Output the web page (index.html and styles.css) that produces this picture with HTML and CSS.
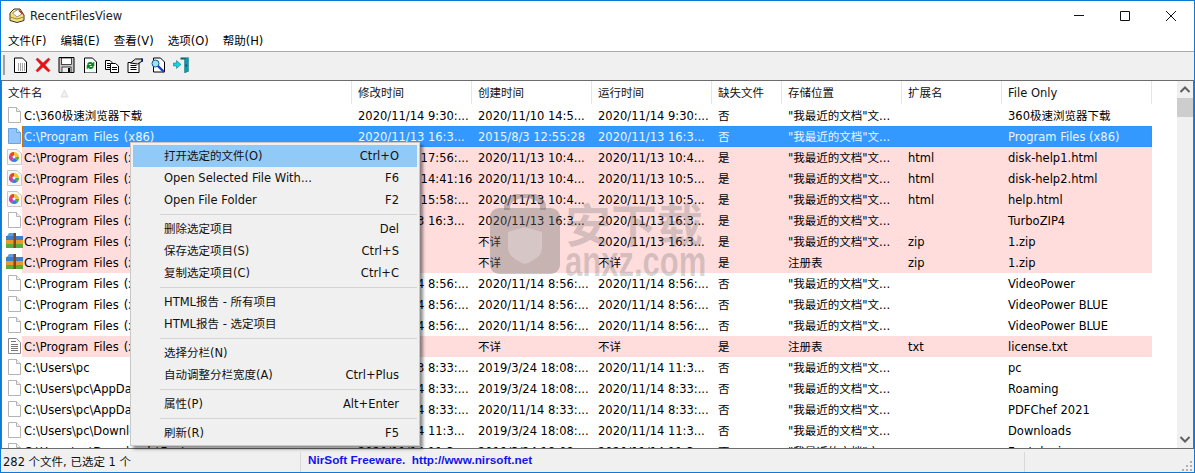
FILE: index.html
```html
<!DOCTYPE html>
<html lang="zh-CN">
<head>
<meta charset="utf-8">
<title>RecentFilesView</title>
<link rel="stylesheet" href="styles.css">
</head>
<body>
<svg class="defs" width="0" height="0" aria-hidden="true">
  <defs>
    <symbol id="doc" viewBox="0 0 13 16"><path d="M.5 .5H8.500L12.500 4.500V15.500H.5Z" fill="#fff" stroke="#b4b4b4"/><path d="M8.500 .5V4.500H12.500" fill="#f0f0f0" stroke="#b4b4b4"/></symbol>
    <symbol id="docsel" viewBox="0 0 13 16"><path d="M.5 .5H8.500L12.500 4.500V15.500H.5Z" fill="#93c5fa" stroke="#6ba3e0"/><path d="M8.500 .5V4.500H12.500" fill="#c3defa" stroke="#6ba3e0"/></symbol>
    <symbol id="txt" viewBox="0 0 13 16"><path d="M.5 .5H8.500L12.500 4.500V15.500H.5Z" fill="#fff" stroke="#8a8a8a"/><path d="M3 3.500H8M3 6.500H10M3 8.500H10M3 10.500H10M3 12.500H10" stroke="#777" fill="none"/></symbol>
    <symbol id="web" viewBox="0 0 15 16"><path d="M.5 .5H10L14.500 4.500V15.500H.5Z" fill="#f6f6f6" stroke="#c8c8c8"/><circle cx="7" cy="8" r="5" fill="#f4c430"/><path d="M7 8V3A5 5 0 0 0 2.300 6.300Z" fill="#e8413c"/><path d="M7 8L2.300 6.300A5 5 0 0 0 4.500 12.300Z" fill="#c93fa8"/><path d="M7 8L4.500 12.300A5 5 0 0 0 10.500 11.600Z" fill="#3b7de8"/><path d="M7 8L10.500 11.600A5 5 0 0 0 12 8Z" fill="#42b35a"/><circle cx="7" cy="8" r="1.400" fill="#fff"/></symbol>
    <symbol id="zip" viewBox="0 0 17 16"><path d="M1 3L3 0H9L10 3Z" fill="#5aa0e4"/><rect x="0" y="3" width="17" height="4" fill="#3f7fc9"/><rect x="0" y="7" width="17" height="4" fill="#e79a2b"/><rect x="0" y="11" width="17" height="4" fill="#5cab3c"/><rect x="7.500" y="0" width="2.500" height="15" fill="#7b4a1e"/></symbol>
    <symbol id="tb-new" viewBox="-3 -.5 19 16"><path d="M.5 .5H8.500L12.500 4.500V15H.5Z" fill="#fff" stroke="#000"/><path d="M4 6h1v1H4zM6 6h1v1H6zM8 6h1v1H8zM10 6h1v1h-1zM4 8h1v1H4zM6 8h1v1H6zM8 8h1v1H8zM10 8h1v1h-1zM4 10h1v1H4zM6 10h1v1H6zM8 10h1v1H8zM10 10h1v1h-1zM4 12h1v1H4zM6 12h1v1H6zM8 12h1v1H8zM10 12h1v1h-1z" fill="#444"/></symbol>
    <symbol id="tb-del" viewBox="-4 -1 23 16"><path d="M1.500 0L7 5L12.500 0L14 1.500L9 7L14 12.500L12.500 14L7 9L1.500 14L0 12.500L5 7L0 1.500Z" fill="#ee1111" stroke="#a00" stroke-width=".4"/></symbol>
    <symbol id="tb-save" viewBox="-3.500 0 23 16"><path d="M.5 .5H15.500V15.500H.5Z" fill="#c8c8c8" stroke="#000"/><rect x="3" y="1" width="10" height="6.500" fill="#fff" stroke="#000" stroke-width=".7"/><rect x="3.500" y="10" width="9" height="5.500" fill="#eee" stroke="#000" stroke-width=".7"/><rect x="9.500" y="11" width="2" height="4" fill="#000"/></symbol>
    <symbol id="tb-ref" viewBox="-6 -.5 23 16"><path d="M.5 .5H8.500L12.500 4.500V15.500H.5Z" fill="#fff" stroke="#000"/><path d="M3 7A3.500 3.500 0 0 1 8.800 5.500L10.300 4V8.500H5.800L7.300 7A2 2 0 0 0 4.500 7.500Z" fill="#0a8a1f"/><path d="M10 9A3.500 3.500 0 0 1 4.200 10.500L2.700 12V7.500H7.200L5.700 9A2 2 0 0 0 8.500 8.500Z" fill="#0a8a1f"/></symbol>
    <symbol id="tb-copy" viewBox="-4 -3 23 16"><path d="M.5 .5H5L7.500 3V9.500H.5Z" fill="#fff" stroke="#000"/><path d="M2 3.500H5M2 5.500H5M2 7.500H5" stroke="#000"/><path d="M5.500 3.500H10.500L13.500 6V12.500H5.500Z" fill="#fff" stroke="#000"/><path d="M7 7.500H12M7 9.500H12" stroke="#000"/></symbol>
    <symbol id="tb-prop" viewBox="-3.500 -1 23 16"><path d="M.5 4.500H11.500V14.500H.5Z" fill="#fff" stroke="#000"/><path d="M3 7.500H9M3 9.500H9M3 11.500H9" stroke="#000"/><path d="M3 5L8 1H15V3L10 6Z" fill="#ddd" stroke="#000"/><path d="M14.500 .5V4" stroke="#00208a" stroke-width="1.500"/></symbol>
    <symbol id="tb-find" viewBox="-4 -.5 23 16"><path d="M2.500 .5H9.500L13.500 4.500V14.500H2.500Z" fill="#fff" stroke="#000"/><circle cx="4.500" cy="6" r="3.500" fill="#9fe3f0" stroke="#0a5a8a"/><path d="M7 8.500L13 14.500" stroke="#1a3fd0" stroke-width="2.400"/></symbol>
    <symbol id="tb-exit" viewBox="-3.500 -.5 23 16"><path d="M7 0H15V14L11 15.500V2H7Z" fill="#0c5d6a"/><path d="M11 1.500L15 0V14L11 15.500Z" fill="#0f9aa8"/><path d="M0 5.500H3V3L7.500 7L3 11V8.500H0Z" fill="#12d6e6" stroke="#066" stroke-width=".5"/><rect x="12" y="7" width="1.200" height="2" fill="#063a42"/></symbol>
  </defs>
</svg>
<div class="window">
  <header class="titlebar">
    <svg class="app-icon" viewBox="0 0 16 15" width="16" height="15"><path d="M1 5L5 1H11L15 7V12.500L8 14.500L1 12.500Z" fill="#f5e27a" stroke="#333"/><path d="M3.500 5L9 1.500L13.500 5.500L8 9Z" fill="#fff" stroke="#555" stroke-width=".6"/><path d="M10 2.500L13.500 6" stroke="#d22" stroke-width="1.200"/><path d="M1 9L8 11L15 9" fill="none" stroke="#9a8a3a"/></svg>
    <span class="app-title">RecentFilesView</span>
    <div class="caption-buttons">
      <svg class="cap" viewBox="0 0 46 29"><path d="M18 14.500H28" stroke="#111" fill="none"/></svg>
      <svg class="cap" viewBox="0 0 46 29"><path d="M18.500 10.500H27.500V19.500H18.500Z" stroke="#111" fill="none"/></svg>
      <svg class="cap" viewBox="0 0 46 29"><path d="M18 10L28 20M28 10L18 20" stroke="#111" fill="none"/></svg>
    </div>
  </header>
  <nav class="menubar">
    <span>文件(F)</span><span>编辑(E)</span><span>查看(V)</span><span>选项(O)</span><span>帮助(H)</span>
  </nav>
  <div class="toolbar">
    <span class="grip"></span>
    <svg class="tb"><use href="#tb-new"/></svg>
    <svg class="tb"><use href="#tb-del"/></svg>
    <svg class="tb"><use href="#tb-save"/></svg>
    <svg class="tb"><use href="#tb-ref"/></svg>
    <svg class="tb"><use href="#tb-copy"/></svg>
    <svg class="tb"><use href="#tb-prop"/></svg>
    <svg class="tb"><use href="#tb-find"/></svg>
    <svg class="tb"><use href="#tb-exit"/></svg>
  </div>
  <main class="listframe">
    <div class="listmain">
      <div class="head">
        <div class="hc first">文件名<svg class="sort" viewBox="0 0 9 9" width="9" height="9"><path d="M4.500 1L8 8H1Z" fill="#f2f2f2" stroke="#dcdcdc"/></svg></div>
        <div class="hc">修改时间</div><div class="hc">创建时间</div><div class="hc">运行时间</div><div class="hc">缺失文件</div><div class="hc">存储位置</div><div class="hc">扩展名</div><div class="hc">File Only</div>
      </div>
      <div class="rows">
        <div class="row"><svg class="ic"><use href="#doc"/></svg><div class="c name">C:\360极速浏览器下载</div><div class="c">2020/11/14 9:30:...</div><div class="c">2020/11/10 14:5...</div><div class="c">2020/11/14 9:30:...</div><div class="c">否</div><div class="c">"我最近的文档"文...</div><div class="c"></div><div class="c">360极速浏览器下载</div></div>
        <div class="row sel"><svg class="ic"><use href="#docsel"/></svg><div class="c name">C:\Program Files (x86)</div><div class="c">2020/11/13 16:3...</div><div class="c">2015/8/3 12:55:28</div><div class="c">2020/11/13 16:3...</div><div class="c">否</div><div class="c">"我最近的文档"文...</div><div class="c"></div><div class="c">Program Files (x86)</div></div>
        <div class="row miss"><svg class="ic"><use href="#web"/></svg><div class="c name">C:\Program Files (x86)\disk</div><div class="c">2020/11/1 17:56:...</div><div class="c">2020/11/13 10:4...</div><div class="c">2020/11/13 10:4...</div><div class="c">是</div><div class="c">"我最近的文档"文...</div><div class="c">html</div><div class="c">disk-help1.html</div></div>
        <div class="row miss"><svg class="ic"><use href="#web"/></svg><div class="c name">C:\Program Files (x86)\disk</div><div class="c">2020/11/1 14:41:16</div><div class="c">2020/11/13 10:4...</div><div class="c">2020/11/13 10:5...</div><div class="c">是</div><div class="c">"我最近的文档"文...</div><div class="c">html</div><div class="c">disk-help2.html</div></div>
        <div class="row miss"><svg class="ic"><use href="#web"/></svg><div class="c name">C:\Program Files (x86)\help</div><div class="c">2020/11/1 15:58:...</div><div class="c">2020/11/13 10:4...</div><div class="c">2020/11/13 10:5...</div><div class="c">是</div><div class="c">"我最近的文档"文...</div><div class="c">html</div><div class="c">help.html</div></div>
        <div class="row miss"><svg class="ic"><use href="#doc"/></svg><div class="c name">C:\Program Files (x86)\Turbo</div><div class="c">2020/11/13 16:3...</div><div class="c">2020/11/13 16:3...</div><div class="c">2020/11/13 16:3...</div><div class="c">是</div><div class="c">"我最近的文档"文...</div><div class="c"></div><div class="c">TurboZIP4</div></div>
        <div class="row miss"><svg class="ic"><use href="#zip"/></svg><div class="c name">C:\Program Files (x86)\1.zip</div><div class="c"></div><div class="c">不详</div><div class="c">2020/11/13 16:3...</div><div class="c">是</div><div class="c">"我最近的文档"文...</div><div class="c">zip</div><div class="c">1.zip</div></div>
        <div class="row miss"><svg class="ic"><use href="#zip"/></svg><div class="c name">C:\Program Files (x86)\1.zip</div><div class="c"></div><div class="c">不详</div><div class="c">不详</div><div class="c">是</div><div class="c">注册表</div><div class="c">zip</div><div class="c">1.zip</div></div>
        <div class="row"><svg class="ic"><use href="#doc"/></svg><div class="c name">C:\Program Files (x86)\Video</div><div class="c">2020/11/14 8:56:...</div><div class="c">2020/11/14 8:56:...</div><div class="c">2020/11/14 8:56:...</div><div class="c">否</div><div class="c">"我最近的文档"文...</div><div class="c"></div><div class="c">VideoPower</div></div>
        <div class="row"><svg class="ic"><use href="#doc"/></svg><div class="c name">C:\Program Files (x86)\Video</div><div class="c">2020/11/14 8:56:...</div><div class="c">2020/11/14 8:56:...</div><div class="c">2020/11/14 8:56:...</div><div class="c">否</div><div class="c">"我最近的文档"文...</div><div class="c"></div><div class="c">VideoPower BLUE</div></div>
        <div class="row"><svg class="ic"><use href="#doc"/></svg><div class="c name">C:\Program Files (x86)\Video</div><div class="c">2020/11/14 8:56:...</div><div class="c">2020/11/14 8:56:...</div><div class="c">2020/11/14 8:56:...</div><div class="c">否</div><div class="c">"我最近的文档"文...</div><div class="c"></div><div class="c">VideoPower BLUE</div></div>
        <div class="row miss"><svg class="ic"><use href="#txt"/></svg><div class="c name">C:\Program Files (x86)\lice</div><div class="c"></div><div class="c">不详</div><div class="c">不详</div><div class="c">是</div><div class="c">注册表</div><div class="c">txt</div><div class="c">license.txt</div></div>
        <div class="row"><svg class="ic"><use href="#doc"/></svg><div class="c name">C:\Users\pc</div><div class="c">2020/11/13 8:33:...</div><div class="c">2019/3/24 18:08:...</div><div class="c">2020/11/14 11:3...</div><div class="c">否</div><div class="c">"我最近的文档"文...</div><div class="c"></div><div class="c">pc</div></div>
        <div class="row"><svg class="ic"><use href="#doc"/></svg><div class="c name">C:\Users\pc\AppData\Roaming</div><div class="c">2020/11/14 8:33:...</div><div class="c">2019/3/24 18:08:...</div><div class="c">2020/11/14 8:33:...</div><div class="c">否</div><div class="c">"我最近的文档"文...</div><div class="c"></div><div class="c">Roaming</div></div>
        <div class="row"><svg class="ic"><use href="#doc"/></svg><div class="c name">C:\Users\pc\AppData\PDFChef</div><div class="c">2020/11/14 8:33:...</div><div class="c">2020/11/14 8:33:...</div><div class="c">2020/11/14 8:33:...</div><div class="c">否</div><div class="c">"我最近的文档"文...</div><div class="c"></div><div class="c">PDFChef 2021</div></div>
        <div class="row"><svg class="ic"><use href="#doc"/></svg><div class="c name">C:\Users\pc\Downloads</div><div class="c">2020/11/14 11:3...</div><div class="c">2019/3/24 18:08:...</div><div class="c">2020/11/14 11:3...</div><div class="c">否</div><div class="c">"我最近的文档"文...</div><div class="c"></div><div class="c">Downloads</div></div>
        <div class="row"><svg class="ic"><use href="#doc"/></svg><div class="c name">C:\Users\pc\Downloads\Font</div><div class="c">2020/11/14 11:3...</div><div class="c">2019/3/24 18:08:...</div><div class="c">2020/11/14 11:3...</div><div class="c">否</div><div class="c">"我最近的文档"文...</div><div class="c"></div><div class="c">Fontplugin</div></div>
      </div>
    </div>
    <div class="scrollbar">
      <svg class="arrow" viewBox="0 0 16 17"><path d="M3.500 11L8 6.500L12.500 11" fill="none" stroke="#606060" stroke-width="2"/></svg>
      <div class="thumb"></div>
      <div class="track"></div>
      <svg class="arrow" viewBox="0 0 16 17"><path d="M3.500 6L8 10.500L12.500 6" fill="none" stroke="#606060" stroke-width="2"/></svg>
    </div>
  </main>
  <footer class="statusbar">
    <div class="st count">282 个文件, 已选定 1 个</div>
    <div class="st link">NirSoft Freeware.&nbsp; http://www.nirsoft.net</div>
    <div class="st rest"></div>
    <svg class="sizer" viewBox="0 0 11 11" width="11" height="11"><path d="M8 1h2v2H8zM4 5h2v2H4zM8 5h2v2H8zM0 9h2v2H0zM4 9h2v2H4zM8 9h2v2H8z" fill="#b0b0b0"/></svg>
  </footer>

  <div class="watermark" aria-hidden="true">
    <svg class="lock" viewBox="0 0 70 82" width="70" height="82">
      <path d="M17 16V13A18 12 0 0 1 53 13V16" fill="none" stroke="#6e6e6e" stroke-opacity=".42" stroke-width="6"/>
      <rect y="14" width="70" height="66" rx="9" fill="#6e6e6e" fill-opacity=".38"/>
      <path d="M35 33L52 38V54C52 62 43 67 35 70C27 67 18 62 18 54V38Z" fill="#fff" fill-opacity=".25"/>
    </svg>
    <div class="wm-text"><div class="wm-cn">安下载</div><div class="wm-en">anxz.com</div></div>
  </div>

  <div class="ctxmenu">
    <div class="mi hot"><span>打开选定的文件(O)</span><span>Ctrl+O</span></div>
    <div class="mi"><span>Open Selected File With...</span><span>F6</span></div>
    <div class="mi"><span>Open File Folder</span><span>F2</span></div>
    <div class="msep"></div>
    <div class="mi"><span>删除选定项目</span><span>Del</span></div>
    <div class="mi"><span>保存选定项目(S)</span><span>Ctrl+S</span></div>
    <div class="mi"><span>复制选定项目(C)</span><span>Ctrl+C</span></div>
    <div class="msep"></div>
    <div class="mi"><span>HTML报告 - 所有项目</span></div>
    <div class="mi"><span>HTML报告 - 选定项目</span></div>
    <div class="msep"></div>
    <div class="mi"><span>选择分栏(N)</span></div>
    <div class="mi"><span>自动调整分栏宽度(A)</span><span>Ctrl+Plus</span></div>
    <div class="msep"></div>
    <div class="mi"><span>属性(P)</span><span>Alt+Enter</span></div>
    <div class="msep"></div>
    <div class="mi"><span>刷新(R)</span><span>F5</span></div>
  </div>
</div>
</body>
</html>
```
FILE: styles.css
```css
* { box-sizing: border-box; }
html, body { margin: 0; padding: 0; overflow: hidden; }
body {
  width: 1195px; height: 473px; background: #fff; color: #000;
  font: 11.5px/16px "DejaVu Sans", "Noto Sans CJK SC", sans-serif;
}
.defs { position: absolute; }
.window {
  position: relative; width: 1195px; height: 473px; display: flex; flex-direction: column;
  border: 1px solid #0c7ad6; background: #fff; overflow: hidden;
}
.titlebar { height: 29px; flex: none; display: flex; align-items: center; padding-left: 8px; }
.app-icon { margin-right: 5px; }
.app-title { color: #222; }
.caption-buttons { margin-left: auto; display: flex; }
.cap { width: 46px; height: 29px; display: block; }
.menubar { height: 21px; flex: none; display: flex; gap: 14px; padding-left: 7px; align-items: center; }
.toolbar {
  height: 29px; flex: none; background: #f0f0f0; border-top: 1px solid #a9a9a9;
  display: flex; align-items: center; padding: 0 0 3px 2px;
}
.grip { width: 2px; height: 20px; background: #a0a0a0; margin-right: 4px; }
.tb { display: block; width: 23px; height: 16px; }
.listframe { flex: 1; min-height: 0; display: flex; border: 1px solid #6d6d6d; overflow: hidden; }
.listmain { width: 1175px; flex: none; display: flex; flex-direction: column; min-height: 0; }
.head, .row { display: grid; grid-template-columns: 350px 120px 120px 120px 70px 120px 100px 150px; }
.head { height: 24px; flex: none; color: #111; }
.hc { padding: 4px 0 0 6px; border-right: 1px solid #e5e5e5; height: 23px; white-space: nowrap; }
.hc.first { padding-left: 6px; }
.sort { margin-left: 17px; vertical-align: -1px; }
.rows { flex: 1; min-height: 0; overflow: hidden; }
.row { height: 21px; width: 1150px; position: relative; }
.ic { position: absolute; left: 4px; top: 2px; width: 17px; height: 16px; }
.c { padding: 3px 0 0 6px; white-space: nowrap; overflow: hidden; color: #000; }
.c.name { padding-left: 22px; word-spacing: 1.5px; }
.miss { background: linear-gradient(90deg, #fff 20px, #ffdddd 20px); }
.sel { background: linear-gradient(90deg, #fff 20px, #3399ff 20px); }
.sel .c { color: #eaf4ff; }
.sel::after { content: ""; position: absolute; left: 20px; right: 0; top: 0; bottom: 0; border: 1px dotted #c96a10; }
.scrollbar { flex: 1; background: #f0f0f0; display: flex; flex-direction: column; }
.arrow { width: 16px; height: 17px; flex: none; display: block; }
.thumb { height: 19px; flex: none; background: #cdcdcd; }
.track { flex: 1; }
.statusbar { flex: none; height: 23px; background: #f0f0f0; display: flex; align-items: flex-end; position: relative; }
.st { height: 20px; white-space: nowrap; }
.count { width: 300px; padding: 2px 0 0 2px; border-right: 1px solid #d8d8d8; color: #111; }
.link { width: 723px; padding: 0 0 0 7px; color: #1414ee; font: bold 11.75px/16px "Liberation Sans", sans-serif; }
.rest { flex: 1; border-left: 1px solid #d8d8d8; }
.sizer { position: absolute; right: 1px; bottom: 1px; }
.watermark { position: absolute; left: 489px; top: 193px; display: flex; gap: 5px; pointer-events: none; }
.wm-text { padding-top: 6px; color: rgba(110,110,110,.28); font-family: "Noto Sans CJK SC", sans-serif; }
.wm-cn { font-size: 46px; line-height: 44px; font-weight: 700; }
.wm-en { font: 700 31px/28px "Liberation Sans", sans-serif; transform: scaleY(1.35); transform-origin: left top; }
.ctxmenu {
  position: absolute; left: 129px; top: 141px; width: 290px; height: 304px;
  background: #f0f0f0; border: 1px solid #c8c8c8; padding: 2px; box-shadow: 3px 3px 3px rgba(0,0,0,.45);
}
.mi { height: 22px; display: flex; justify-content: space-between; align-items: center; padding: 0 18px 0 31px; color: #111; white-space: nowrap; }
.mi.hot { background: #91c9f7; }
.msep { height: 7px; margin-left: 27px; position: relative; }
.msep::before { content: ""; position: absolute; left: 0; right: 0; top: 3px; height: 1px; background: #d4d4d4; }
```
